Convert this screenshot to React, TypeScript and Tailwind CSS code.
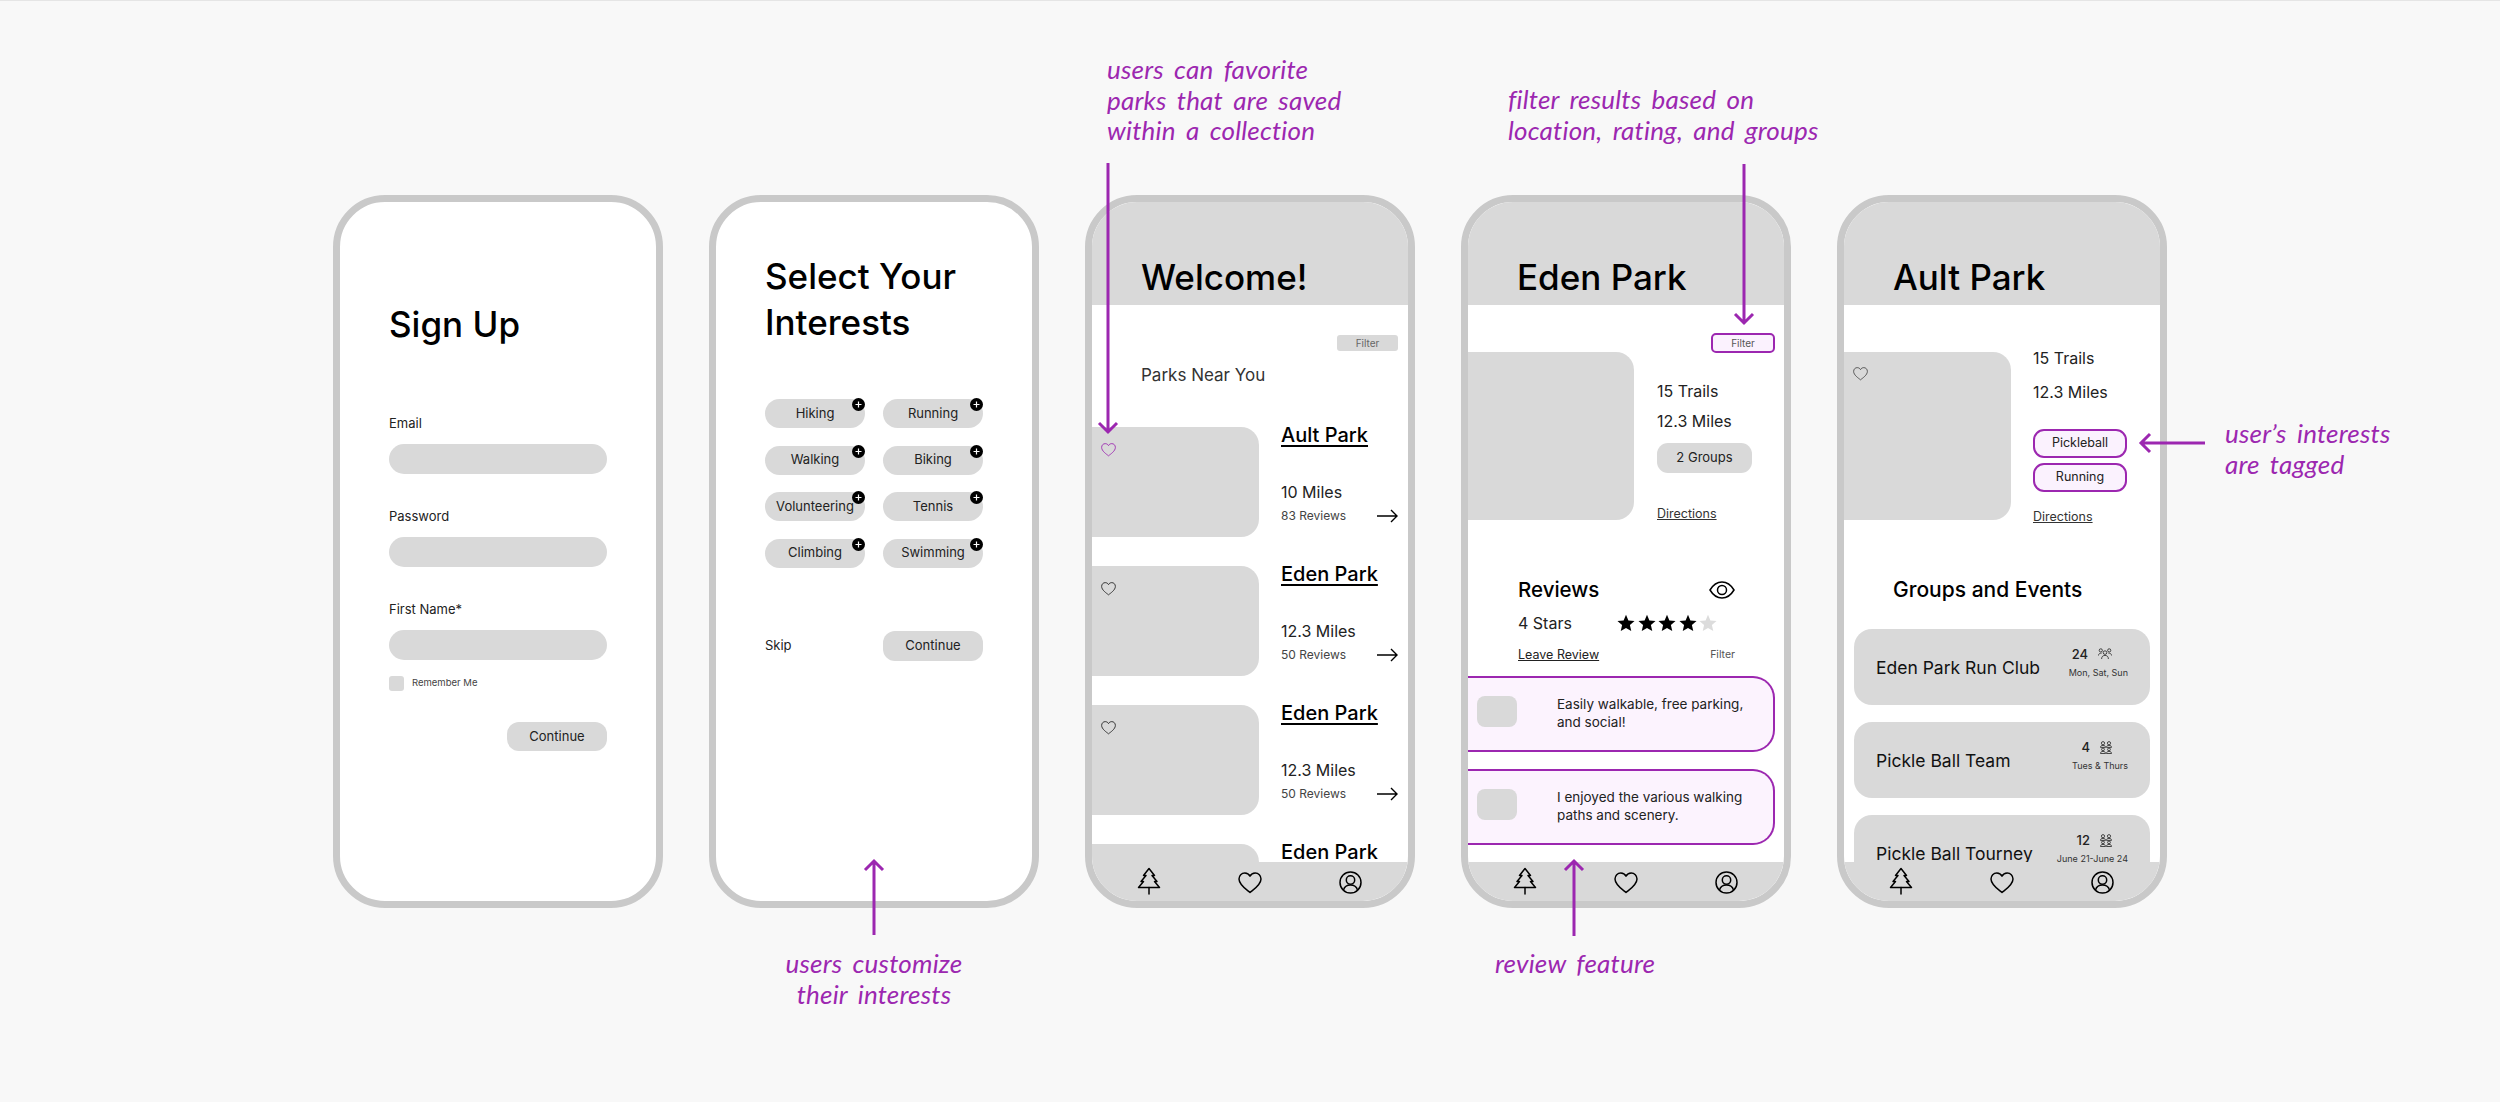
import { ReactNode } from "react";

const sans = "font-['Inter','Noto_Sans',sans-serif]";

const TreeIcon = () => (
  <svg width="24" height="28" viewBox="0 0 24 28" fill="none" stroke="#000" strokeWidth="1.5" strokeLinejoin="round" strokeLinecap="round">
    <path d="M12 1.5 L6.5 8.5 H9 L4 14.5 H6.5 L1.5 20.5 H22.5 L17.5 14.5 H20 L15 8.5 H17.5 Z" />
    <path d="M12 20.5 V27" />
  </svg>
);

const HeartIcon = ({ size = 24, color = "#000", weight = 1.5 }: { size?: number; color?: string; weight?: number }) => (
  <svg width={size} height={(size * 22) / 24} viewBox="0 0 24 22" fill="none" stroke={color} strokeWidth={weight} strokeLinejoin="round">
    <path d="M12 20.5 C9 18 1 13 1 7 C1 3.5 3.6 1 6.8 1 C9 1 11 2.2 12 4.2 C13 2.2 15 1 17.2 1 C20.4 1 23 3.5 23 7 C23 13 15 18 12 20.5 Z" />
  </svg>
);

const ProfileIcon = () => (
  <svg width="23" height="23" viewBox="0 0 23 23" fill="none" stroke="#000" strokeWidth="1.5">
    <circle cx="11.5" cy="11.5" r="10.5" />
    <circle cx="11.5" cy="9" r="4.2" />
    <path d="M4.5 19 C5.5 15.5 8 14 11.5 14 C15 14 17.5 15.5 18.5 19" />
  </svg>
);

const EyeIcon = () => (
  <svg width="26" height="18" viewBox="0 0 26 18" fill="none" stroke="#000" strokeWidth="1.5">
    <path d="M1 9 C4 4 8 1 13 1 C18 1 22 4 25 9 C22 14 18 17 13 17 C8 17 4 14 1 9 Z" />
    <circle cx="13" cy="9" r="4.5" />
  </svg>
);

const StarIcon = ({ color }: { color: string }) => (
  <svg width="18" height="18" viewBox="0 0 24 24" fill={color}>
    <path d="M12 1 L15.2 8.6 L23.4 9.3 L17.2 14.7 L19 22.8 L12 18.5 L5 22.8 L6.8 14.7 L0.6 9.3 L8.8 8.6 Z" />
  </svg>
);

// the run club has a trio, the others a 2x2 block of people
const GroupIcon = ({ trio }: { trio: boolean }) =>
  trio ? (
    <svg width="14" height="12" viewBox="0 0 14 12" fill="none" stroke="#222" strokeWidth="0.8">
      <circle cx="2.8" cy="2.4" r="1.6" />
      <circle cx="11.2" cy="2.4" r="1.6" />
      <circle cx="7" cy="4.6" r="1.8" />
      <path d="M0.5 7.5 C0.5 5.8 2 5 3.6 5.2 M13.5 7.5 C13.5 5.8 12 5 10.4 5.2" />
      <path d="M3.6 11 C3.6 8.6 5 7.4 7 7.4 C9 7.4 10.4 8.6 10.4 11" />
    </svg>
  ) : (
    <svg width="12" height="13" viewBox="0 0 12 13" fill="none" stroke="#222" strokeWidth="0.8">
      <circle cx="3" cy="2.2" r="1.6" />
      <circle cx="9" cy="2.2" r="1.6" />
      <path d="M0.5 6.4 C0.5 4.9 1.5 4.4 3 4.4 C4.5 4.4 5.5 4.9 5.5 6.4 H0.5 M6.5 6.4 C6.5 4.9 7.5 4.4 9 4.4 C10.5 4.4 11.5 4.9 11.5 6.4 H6.5" />
      <circle cx="3" cy="8.4" r="1.4" />
      <circle cx="9" cy="8.4" r="1.4" />
      <path d="M0.5 12.5 C0.5 11 1.5 10.4 3 10.4 C4.5 10.4 5.5 11 5.5 12.5 H0.5 M6.5 12.5 C6.5 11 7.5 10.4 9 10.4 C10.5 10.4 11.5 11 11.5 12.5 H6.5" />
    </svg>
  );

const PlusDot = () => (
  <svg className="absolute right-0 -top-px" width="13" height="13" viewBox="0 0 13 13">
    <circle cx="6.5" cy="6.5" r="6.5" fill="#000" />
    <path d="M6.5 3.5 V9.5 M3.5 6.5 H9.5" stroke="#fff" strokeWidth="1.2" />
  </svg>
);

const Phone = ({ children }: { children: ReactNode }) => (
  <div className={`w-[330px] h-[713px] shrink-0 flex flex-col overflow-hidden rounded-[52px] border-[7px] border-[#c9c9c9] bg-white text-black ${sans}`}>
    {children}
  </div>
);

const Header = ({ title }: { title: string }) => (
  <div className="h-[103px] shrink-0 bg-[#d9d9d9] pl-[49px] pt-[52px] text-[35px] leading-[46px] font-medium">{title}</div>
);

const BottomNav = () => (
  <div className="h-[39px] shrink-0 bg-[#d9d9d9] flex items-start justify-between pl-[45px] pr-[46px] pt-[5px] relative">
    <TreeIcon />
    <div className="pt-[5px]"><HeartIcon /></div>
    <div className="pt-[4px]"><ProfileIcon /></div>
  </div>
);

const Field = ({ label, className }: { label: string; className: string }) => (
  <div className={className}>
    <div className="text-[13px] leading-[18px] text-[#222]">{label}</div>
    <div className="mt-[12px] h-[30px] rounded-[15px] bg-[#d9d9d9]" />
  </div>
);

const SignUp = () => (
  <Phone>
    <div className="pl-[49px] pr-[49px] pt-[99px]">
      <div className="text-[35px] leading-[46px] font-medium">Sign Up</div>
      <Field label="Email" className="mt-[67px]" />
      <Field label="Password" className="mt-[33px]" />
      <Field label="First Name*" className="mt-[33px]" />
      <div className="mt-[16px] flex items-center gap-[8px]">
        <div className="h-[15px] w-[15px] rounded-[3px] bg-[#d9d9d9]" />
        <span className="text-[9.5px] text-[#444]">Remember Me</span>
      </div>
      <div className="mt-[31px] flex justify-end">
        <div className="flex h-[29px] w-[100px] items-center justify-center rounded-[12px] bg-[#d9d9d9] text-[13px] text-[#222]">Continue</div>
      </div>
    </div>
  </Phone>
);

const interests = ["Hiking", "Running", "Walking", "Biking", "Volunteering", "Tennis", "Climbing", "Swimming"];

const Interests = () => (
  <Phone>
    <div className="pl-[49px] pr-[49px] pt-[51px]">
      <div className="text-[35px] leading-[46px] font-medium">
        Select Your
        <br />
        Interests
      </div>
      <div className="mt-[54px] grid grid-cols-2 gap-x-[18px] gap-y-[17.5px]">
        {interests.map((name) => (
          <div key={name} className="relative flex h-[29px] items-center justify-center rounded-[15px] bg-[#d9d9d9] text-[13px] text-[#222]">
            {name}
            <PlusDot />
          </div>
        ))}
      </div>
      <div className="mt-[63px] flex items-center justify-between">
        <span className="text-[13px] text-[#222]">Skip</span>
        <div className="flex h-[30px] w-[100px] items-center justify-center rounded-[12px] bg-[#d9d9d9] text-[13px] text-[#222]">Continue</div>
      </div>
    </div>
  </Phone>
);

// last card runs under the nav bar, its heart isn't visible
const parks = [
  { name: "Ault Park", miles: "10 Miles", reviews: "83 Reviews", heart: "#9c27b0" },
  { name: "Eden Park", miles: "12.3 Miles", reviews: "50 Reviews", heart: "#222" },
  { name: "Eden Park", miles: "12.3 Miles", reviews: "50 Reviews", heart: "#222" },
  { name: "Eden Park", miles: "12.3 Miles", reviews: "50 Reviews", heart: "" },
];

const Welcome = () => (
  <Phone>
    <Header title="Welcome!" />
    <div className="min-h-0 flex-1 overflow-hidden">
      <div className="flex justify-end pr-[10px] pt-[30px]">
        <div className="flex h-[16px] w-[61px] items-center justify-center rounded-[3px] bg-[#d9d9d9] text-[10px] text-[#666]">Filter</div>
      </div>
      <div className="pl-[49px] pt-[12px] text-[17px] leading-[24px] text-[#333]">Parks Near You</div>
      <div className="mt-[40px] flex flex-col gap-[29px]">
        {parks.map((park, i) => (
          <div key={i} className="flex">
            <div className="h-[110px] w-[167px] shrink-0 rounded-r-[18px] bg-[#d9d9d9] pl-[9px] pt-[16px]">
              {park.heart && <HeartIcon size={15} weight={1.4} color={park.heart} />}
            </div>
            <div className="flex-1 pl-[22px] pr-[10px]">
              <div className="text-[20px] leading-[16px] font-medium underline underline-offset-[3px]">{park.name}</div>
              <div className="mt-[37px] text-[16px] leading-[24px] text-[#222]">{park.miles}</div>
              <div className="mt-[2px] flex items-center justify-between">
                <span className="text-[12px] leading-[20px] text-[#444]">{park.reviews}</span>
                <svg width="21" height="14" viewBox="0 0 21 14" fill="none" stroke="#000" strokeWidth="1.4">
                  <path d="M0 7 H20 M14 1 L20 7 L14 13" />
                </svg>
              </div>
            </div>
          </div>
        ))}
      </div>
    </div>
    <BottomNav />
  </Phone>
);

const reviews = [
  ["Easily walkable, free parking,", "and social!"],
  ["I enjoyed the various walking", "paths and scenery."],
];

const EdenPark = () => (
  <Phone>
    <Header title="Eden Park" />
    <div className="min-h-0 flex-1 overflow-hidden">
      <div className="flex justify-end pr-[9px] pt-[28px]">
        <div className="flex h-[20px] w-[64px] items-center justify-center rounded-[5px] border-2 border-[#9c27b0] bg-[#fbf2fe] text-[10px] text-[#555]">Filter</div>
      </div>
      <div className="-mt-px flex">
        <div className="h-[168px] w-[166px] shrink-0 rounded-r-[18px] bg-[#d9d9d9]" />
        <div className="pl-[23px] pt-[26px]">
          <div className="text-[16px] leading-[26px] text-[#222]">15 Trails</div>
          <div className="mt-[4px] text-[16px] leading-[26px] text-[#222]">12.3 Miles</div>
          <div className="mt-[9px] flex h-[30px] w-[95px] items-center justify-center rounded-[11px] bg-[#d9d9d9] text-[13px] text-[#222]">2 Groups</div>
          <div className="mt-[32px] text-[12.5px] leading-[18px] text-[#333] underline">Directions</div>
        </div>
      </div>
      <div className="mt-[53px] pl-[50px] pr-[49px]">
        <div className="flex items-center justify-between">
          <span className="text-[20.5px] leading-[28px] font-medium">Reviews</span>
          <EyeIcon />
        </div>
        <div className="mt-[5px] flex items-center">
          <span className="w-[99px] text-[16px] leading-[28px] text-[#222]">4 Stars</span>
          <div className="flex gap-[2.5px]">
            {[0, 1, 2, 3].map((i) => <StarIcon key={i} color="#000" />)}
            <StarIcon color="#dcdcdc" />
          </div>
        </div>
        <div className="mt-[8px] flex items-center justify-between">
          <span className="text-[12.5px] leading-[20px] underline text-[#222]">Leave Review</span>
          <span className="text-[10.5px] text-[#555]">Filter</span>
        </div>
      </div>
      <div className="mt-[11px] flex flex-col gap-[17px] pr-[9px]">
        {reviews.map((lines) => (
          <div key={lines[0]} className="flex h-[76px] items-start rounded-r-[22px] border-y-2 border-r-2 border-[#9c27b0] bg-[#fcf3fe] pl-[9px] pt-[18px]">
            <div className="h-[31px] w-[40px] shrink-0 rounded-[8px] bg-[#d9d9d9]" />
            <div className="pl-[40px] text-[13.5px] leading-[17.5px] text-[#222]">
              {lines[0]}
              <br />
              {lines[1]}
            </div>
          </div>
        ))}
      </div>
    </div>
    <BottomNav />
  </Phone>
);

const groups = [
  { name: "Eden Park Run Club", count: "24", when: "Mon, Sat, Sun", trio: true },
  { name: "Pickle Ball Team", count: "4", when: "Tues & Thurs", trio: false },
  { name: "Pickle Ball Tourney", count: "12", when: "June 21-June 24", trio: false },
];

const AultPark = () => (
  <Phone>
    <Header title="Ault Park" />
    <div className="min-h-0 flex-1 overflow-hidden">
      <div className="flex pt-[47px]">
        <div className="h-[168px] w-[167px] shrink-0 rounded-r-[18px] bg-[#d9d9d9] pl-[9px] pt-[15px]">
          <HeartIcon size={15} weight={1.2} color="#333" />
        </div>
        <div className="pl-[22px]">
          <div className="-mt-[7px] text-[16px] leading-[26px] text-[#222]">15 Trails</div>
          <div className="mt-[8px] text-[16px] leading-[26px] text-[#222]">12.3 Miles</div>
          <div className="mt-[24px] flex flex-col gap-[5px]">
            {["Pickleball", "Running"].map((tag) => (
              <div key={tag} className="flex h-[29px] w-[94px] items-center justify-center rounded-[11px] border-2 border-[#9c27b0] bg-[#fbf2fe] text-[12.5px] text-[#222]">{tag}</div>
            ))}
          </div>
          <div className="mt-[16px] text-[12.5px] leading-[18px] text-[#333] underline">Directions</div>
        </div>
      </div>
      <div className="mt-[50px] pl-[49px] text-[21px] leading-[28px] font-medium">Groups and Events</div>
      <div className="mt-[25px] flex flex-col gap-[17px] pl-[10px] pr-[10px]">
        {groups.map((group) => (
          <div key={group.name} className="flex h-[76px] shrink-0 items-center justify-between rounded-[18px] bg-[#d9d9d9] pl-[22px] pr-[22px]">
            <span className="pt-[2px] text-[17.5px] text-[#111]">{group.name}</span>
            <div className="flex flex-col items-end pb-[10px]">
              <div className="flex items-center gap-[10px] pr-[16px]">
                <span className="text-[13px] leading-[18px] font-medium text-[#222]">{group.count}</span>
                <GroupIcon trio={group.trio} />
              </div>
              <span className="mt-[4px] text-[9px] leading-[12px] text-[#333]">{group.when}</span>
            </div>
          </div>
        ))}
      </div>
    </div>
    <BottomNav />
  </Phone>
);

// annotation lines sit on top of the phones, they're placed on the page canvas
const note = "absolute z-10 font-['Lato',sans-serif] italic text-[26px] leading-[30.5px] text-[#9c27b0] tracking-[0.2px] [word-spacing:4px] whitespace-nowrap";

const Arrows = () => (
  <svg className="absolute left-0 top-0 z-10 pointer-events-none" width="2500" height="1102" fill="none" stroke="#9c27b0" strokeWidth="3">
    <path d="M1108 162 V431 M1099 422 L1108 431 L1117 422" />
    <path d="M1744 163 V322 M1735 313 L1744 322 L1753 313" />
    <path d="M874 934 V860 M865 869 L874 860 L883 869" />
    <path d="M1574 935 V860 M1565 869 L1574 860 L1583 869" />
    <path d="M2205 442 H2141 M2150 433 L2141 442 L2150 451" />
  </svg>
);

export default function App() {
  return (
    <div className="relative h-[1102px] w-full overflow-hidden border-t border-[#e5e5e5] bg-[#f8f8f8]">
      <div className="flex justify-center gap-[46px] pt-[194px]">
        <SignUp />
        <Interests />
        <Welcome />
        <EdenPark />
        <AultPark />
      </div>
      <Arrows />
      <div className={`${note} left-[1107px] top-[53px]`}>
        users can favorite
        <br />
        parks that are saved
        <br />
        within a collection
      </div>
      <div className={`${note} left-[1508px] top-[83px]`}>
        filter results based on
        <br />
        location, rating, and groups
      </div>
      <div className={`${note} left-[774px] top-[947px] w-[200px] text-center`}>
        users customize
        <br />
        their interests
      </div>
      <div className={`${note} left-[1495px] top-[947px]`}>review feature</div>
      <div className={`${note} left-[2225px] top-[417px]`}>
        user’s interests
        <br />
        are tagged
      </div>
    </div>
  );
}
